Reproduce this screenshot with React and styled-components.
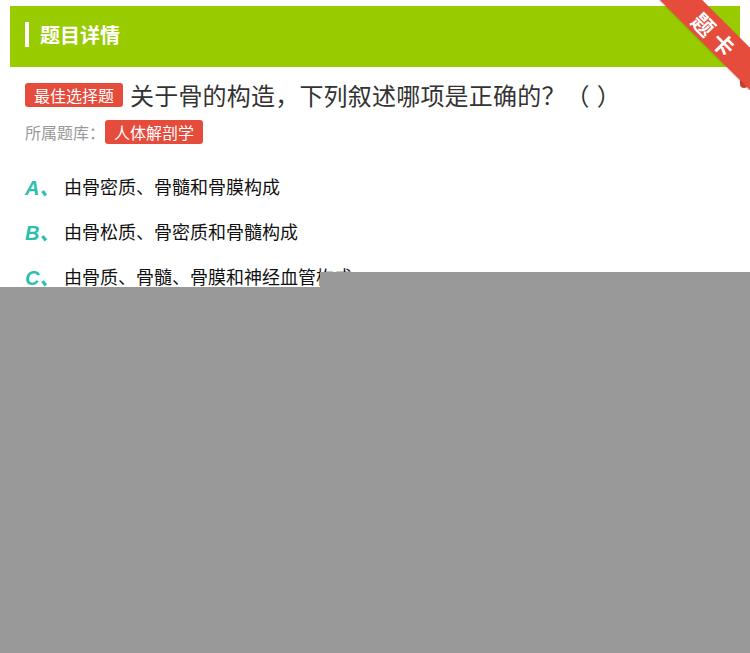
import React from 'react';
import styled, { createGlobalStyle } from 'styled-components';

const Global = createGlobalStyle`
  html, body { margin: 0; padding: 0; background: #fff; }
  body { font-family: "Liberation Sans", "Noto Sans CJK SC", sans-serif; }
`;

const Page = styled.div`
  position: relative;
  width: 750px;
  height: 653px;
  overflow: hidden;
  background: #fff;
  padding: 6px 10px 0;
  box-sizing: border-box;
`;

const Header = styled.div`
  height: 61px;
  box-sizing: border-box;
  padding: 0 0 5px 15px;
  background: #99cc00;
  display: flex;
  align-items: center;
  gap: 11px;
`;

const Bar = styled.span`
  width: 4px;
  height: 25px;
  background: #fff;
`;

const HeaderTitle = styled.h1`
  margin: 0;
  color: #fff;
  font-size: 20px;
  font-weight: bold;
`;

const Ribbon = styled.div`
  position: absolute;
  top: 0;
  right: 0;
  width: 100px;
  height: 90px;
  overflow: hidden;
`;

const Band = styled.div`
  position: absolute;
  top: 17px;
  right: -38px;
  width: 150px;
  height: 30px;
  background: #e64c3c;
  transform: rotate(45deg);
  display: flex;
  align-items: center;
  justify-content: center;
  padding-left: 10px;
  box-sizing: border-box;
  color: #fff;
  font-size: 22px;
  font-weight: bold;
  letter-spacing: 6px;
  box-shadow: 0 1px 2px rgba(0,0,0,0.15);
`;

const Fold = styled.div`
  position: absolute;
  right: 2px;
  top: 66px;
  width: 8px;
  height: 22px;
  background: linear-gradient(90deg, #c93a2c, #e04a3a);
  border-radius: 0 0 4px 4px;
`;

const Body = styled.div`
  padding: 10px 15px 0;
`;

const QuestionRow = styled.div`
  display: flex;
  align-items: center;
  gap: 7px;
  height: 35px;
`;

const Tag = styled.span`
  display: inline-flex;
  align-items: center;
  height: 24px;
  padding: 0 9px;
  background: #e64c3c;
  color: #fff;
  font-size: 16px;
  border-radius: 3px;
  flex-shrink: 0;
`;

const QuestionText = styled.span`
  font-size: 24px;
  color: #333;
  letter-spacing: 0.2px;
`;

const BankRow = styled.div`
  display: flex;
  align-items: center;
  height: 26px;
  margin-top: 7px;
  font-size: 16px;
  color: #999;
`;

const Options = styled.div`
  margin-top: 26px;
  display: flex;
  flex-direction: column;
  gap: 15px;
`;

const Option = styled.div`
  display: flex;
  align-items: center;
  height: 30px;
`;

const Letter = styled.span`
  width: 39px;
  font-size: 20px;
  font-weight: bold;
  font-style: italic;
  color: #2cbfae;
`;

const OptionText = styled.span`
  font-size: 18px;
  color: #111;
`;

const MaskTop = styled.div`
  position: absolute;
  left: 320px;
  right: 0;
  top: 272px;
  height: 15px;
  background: #999;
`;

const Mask = styled.div`
  position: absolute;
  left: 0;
  right: 0;
  top: 287px;
  bottom: 0;
  background: #999;
`;

const options = [
  ['A', '由骨密质、骨髓和骨膜构成'],
  ['B', '由骨松质、骨密质和骨髓构成'],
  ['C', '由骨质、骨髓、骨膜和神经血管构成'],
  ['D', '由骨膜、骨髓和神经构成'],
];

export default function App() {
  return (
    <>
      <Global />
      <Page>
        <Header>
          <Bar />
          <HeaderTitle>题目详情</HeaderTitle>
        </Header>
        <Body>
          <QuestionRow>
            <Tag>最佳选择题</Tag>
            <QuestionText>关于骨的构造，下列叙述哪项是正确的？（ ）</QuestionText>
          </QuestionRow>
          <BankRow>
            所属题库：<Tag>人体解剖学</Tag>
          </BankRow>
          <Options>
            {options.map(([l, t]) => (
              <Option key={l}>
                <Letter>{l}、</Letter>
                <OptionText>{t}</OptionText>
              </Option>
            ))}
          </Options>
        </Body>
        <Ribbon>
          <Fold />
          <Band>题卡</Band>
        </Ribbon>
        <MaskTop />
        <Mask />
      </Page>
    </>
  );
}
